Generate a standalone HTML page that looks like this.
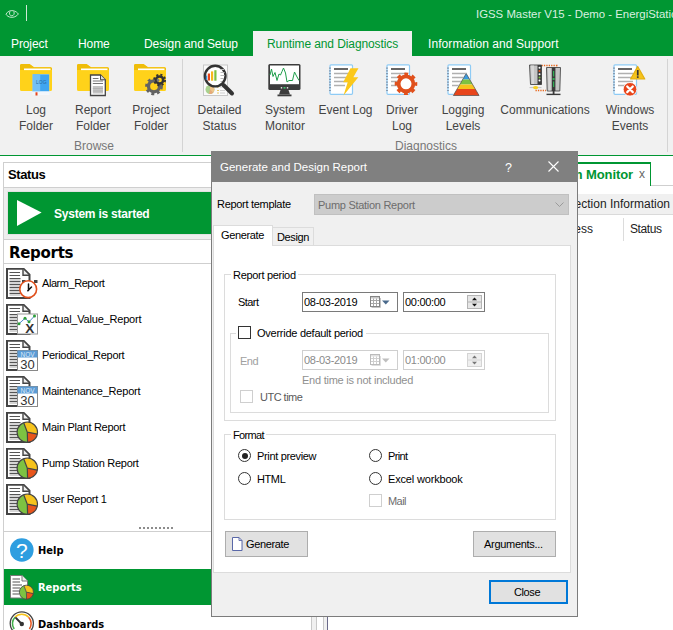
<!DOCTYPE html>
<html><head><meta charset="utf-8"><title>IGSS Master V15 - Demo - EnergiStation</title>
<style>
*{box-sizing:border-box;margin:0;padding:0}
html,body{width:673px;height:630px;overflow:hidden;background:#fff}
body{position:relative;font-family:"Liberation Sans",sans-serif;font-size:12px;color:#000}
.abs{position:absolute}
.t{position:absolute;white-space:nowrap;line-height:1}
#titlebar{left:0;top:0;width:673px;height:56px;background:#009632}
.rt{color:#fff;font-size:12px;top:38px;letter-spacing:-0.1px}
#ribbon{left:0;top:56px;width:673px;height:99px;background:#f1f1f1}
.rl{color:#444;font-size:12px;text-align:center;line-height:15.5px;white-space:nowrap;position:absolute;transform:translateX(-50%)}
.gl{color:#777;font-size:12px;position:absolute;transform:translateX(-50%);top:139px;line-height:14px}
.ico{position:absolute;width:32px;height:32px;top:63px}
.li{position:absolute;left:42px;font-size:11px;line-height:14px;white-space:nowrap;letter-spacing:-0.22px}
.dl{position:absolute;font-size:11px;line-height:14px;white-space:nowrap;letter-spacing:-0.3px}
.nb{position:absolute;left:38px;font-family:"DejaVu Sans Condensed","DejaVu Sans",sans-serif;font-weight:bold;font-size:11px;line-height:14px;letter-spacing:0}
.rad{width:13px;height:13px;border-radius:50%;border:1px solid #333;background:#fff}
.btn{background:#e1e1e1;border:1px solid #adadad}
</style></head><body>
<!-- title + ribbon tabs -->
<div id="titlebar" class="abs"></div>
<div class="abs" style="left:253px;top:31px;width:159px;height:25px;background:#f1f1f1"></div>
<div class="abs" style="left:26px;top:5px;width:1px;height:16px;background:#cfe8d6"></div>
<svg class="abs" style="left:5px;top:9px" width="15" height="10" viewBox="0 0 15 10"><path d="M1 5.200C2.500 2.200 5.500 1.300 8 1.700C10.500 2.100 12.500 3.600 13.400 5C11.500 7.600 8.500 8.600 6 8.300C3.500 8 1.800 6.800 1 5.200Z" fill="none" stroke="#d6efdd" stroke-width="0.900"/><path d="M5 2.500C3.800 4.500 4.800 6.800 6.800 6.800C8.800 6.800 9.800 4.500 8.800 2.500" fill="none" stroke="#d6efdd" stroke-width="0.900"/></svg>
<div class="t" style="left:476px;top:9px;color:#d9f0e0;font-size:11.4px">IGSS Master V15 - Demo - EnergiStation</div>
<div class="t rt" style="left:11px">Project</div>
<div class="t rt" style="left:78px">Home</div>
<div class="t rt" style="left:144px">Design and Setup</div>
<div class="t rt" style="left:267px;color:#009632">Runtime and Diagnostics</div>
<div class="t rt" style="left:428px;letter-spacing:0.08px">Information and Support</div>

<div id="ribbon" class="abs"></div>
<div class="abs" style="left:0;top:155px;width:673px;height:1px;background:#009632"></div>
<div class="abs" style="left:182px;top:59px;width:1px;height:93px;background:#d4d4d4"></div>
<div class="abs" style="left:667px;top:59px;width:1px;height:93px;background:#d4d4d4"></div>

<div class="rl" style="left:36px;top:103px">Log<br>Folder</div>
<div class="rl" style="left:93px;top:103px">Report<br>Folder</div>
<div class="rl" style="left:151px;top:103px">Project<br>Folder</div>
<div class="rl" style="left:219.500px;top:103px">Detailed<br>Status</div>
<div class="rl" style="left:285px;top:103px">System<br>Monitor</div>
<div class="rl" style="left:345.500px;top:103px">Event Log</div>
<div class="rl" style="left:402px;top:103px">Driver<br>Log</div>
<div class="rl" style="left:463px;top:103px">Logging<br>Levels</div>
<div class="rl" style="left:545px;top:103px">Communications</div>
<div class="rl" style="left:630px;top:103px">Windows<br>Events</div>
<div class="gl" style="left:94px">Browse</div>
<div class="gl" style="left:426px">Diagnostics</div>

<!-- left panel -->
<div class="abs" style="left:3px;top:162px;width:211px;height:470px;border:1px solid #cfcfcf;border-right:none;background:#fff"></div>
<div class="abs" style="left:4px;top:187px;width:209px;height:53px;background:#eeeeee;border-top:1px solid #cfcfcf;border-bottom:1px solid #cfcfcf"></div>
<div class="abs" style="left:8px;top:192px;width:205px;height:42px;background:#009632;box-shadow:0 0 0 1px #e2e2e2"></div>
<svg class="abs" style="left:17px;top:200px" width="25" height="26"><polygon points="0,0 24.6,12.6 0,26" fill="#fff"/></svg>
<div class="t" style="left:8px;top:168px;font-weight:bold;font-size:13px;letter-spacing:-0.4px">Status</div>
<div class="t" style="left:54px;top:208px;font-weight:bold;font-size:12px;color:#fff;letter-spacing:-0.23px">System is started</div>
<div class="t" style="left:9px;top:246px;font-family:'DejaVu Sans',sans-serif;font-weight:bold;font-size:15px;letter-spacing:-0.3px">Reports</div>
<div class="abs" style="left:4px;top:263px;width:209px;height:1px;background:#cfcfcf"></div>

<div class="li" style="top:276px;letter-spacing:-0.45px">Alarm_Report</div>
<div class="li" style="top:312px;letter-spacing:-0.20px">Actual_Value_Report</div>
<div class="li" style="top:348px;letter-spacing:-0.30px">Periodical_Report</div>
<div class="li" style="top:384px;letter-spacing:-0.21px">Maintenance_Report</div>
<div class="li" style="top:420px;letter-spacing:-0.28px">Main Plant Report</div>
<div class="li" style="top:456px;letter-spacing:-0.29px">Pump Station Report</div>
<div class="li" style="top:492px;letter-spacing:-0.31px">User Report 1</div>

<div class="abs" style="left:4px;top:531px;width:209px;height:1px;background:#cfcfcf"></div>
<div class="abs" style="left:4px;top:569px;width:209px;height:36px;background:#009632"></div>
<div class="nb" style="top:544px">Help</div>
<div class="nb" style="top:581px;color:#fff">Reports</div>
<div class="nb" style="top:618px">Dashboards</div>


<!-- svg defs -->
<svg width="0" height="0" style="position:absolute">
<defs>
<g id="folder"><path d="M0 1.500Q0 0 1.500 0H9.500L14 3.200H30.500Q32 3.200 32 4.700V25.500Q32 27 30.500 27H1.500Q0 27 0 25.500Z" fill="#ffd21a"/><path d="M0 1.500Q0 0 1.500 0H9.500L14 3.200H30.500Q32 3.200 32 4.700V6H0Z" fill="#efbd0a"/><rect x="4" y="4.500" width="26.500" height="1.600" fill="#fff"/></g>
<g id="doc"><path d="M1 0.700H17.500L23.500 6.700V30H1Z" fill="#fff" stroke="#444" stroke-width="2"/><path d="M17 1.200V7.200H23" fill="#eee" stroke="#444" stroke-width="1.400"/><path d="M3.500 4.500H14M3.500 7.500H14M3.500 10.500H14.500M3.500 13.500H14.500M3.500 16.500H14.500M3.500 19.500H14.500M3.500 22.500H14.500M3.500 25.500H14.500" stroke="#555" stroke-width="1"/><path d="M3.500 12H14.500M3.500 15H14.500M3.500 18H14.500M3.500 21H14.500M3.500 24H14.500M3.500 27H14.500" stroke="#c8c8c8" stroke-width="1.400"/></g>
<g id="pie"><path d="M0 0L-3.6 -9.5A10.2 10.2 0 0 0 0.3 10.2Z" fill="#7dc242"/><path d="M0 0L-3.6 -9.5A10.2 10.2 0 0 1 10 1.9Z" fill="#f6c31c"/><path d="M0 0L10 1.9A10.2 10.2 0 0 1 0.3 10.2Z" fill="#e8551b"/><circle r="10.2" fill="none" stroke="#444" stroke-width="1.2"/><path d="M0 0L-3.6 -9.5M0 0L10 1.9M0 0L0.3 10.2" stroke="#444" stroke-width="1.2" fill="none"/></g>
<g id="cal"><rect x="0.5" y="0.5" width="20" height="20" fill="#fff" stroke="#888" stroke-width="1"/><rect x="0.5" y="0.5" width="20" height="7" fill="#5b9bd5"/><text x="10.5" y="6.6" font-family="Liberation Sans,sans-serif" font-size="6.5" fill="#dbe9f7" text-anchor="middle">NOV</text><text x="10.5" y="18.6" font-family="Liberation Sans,sans-serif" font-size="13" fill="#333" text-anchor="middle">30</text></g>
<g id="pad"><rect x="1" y="0.8" width="22.5" height="29.5" rx="1" fill="#fff" stroke="#8ecbf5" stroke-width="1.2"/><path d="M1 3.5V28" stroke="#7a8aa0" stroke-width="1.6" stroke-dasharray="1.2 1.6"/><rect x="5" y="4" width="14" height="2" fill="#666"/><path d="M5 9.5H20M5 13.5H20M5 17.5H20M5 21.5H16" stroke="#b0b0b0" stroke-width="1.4"/></g>
</defs></svg>
<!-- ribbon icons -->
<svg class="abs" style="left:20px;top:64px" width="34" height="34"><use href="#folder"/><rect x="12.700" y="10.300" width="16.500" height="20.500" fill="#fff"/><rect x="12.700" y="10.300" width="16.500" height="17.200" fill="#3fa5f0"/><rect x="12.700" y="10.300" width="7.500" height="17.200" fill="#72c0f6"/><text x="21.300" y="20.200" font-family="Liberation Sans,sans-serif" font-size="5" fill="#2a6a9c" text-anchor="middle">LOG</text><rect x="12.700" y="27.500" width="16.500" height="3.300" fill="#f2f6fb"/><rect x="15.500" y="28.300" width="2" height="3.200" fill="#e8451b"/></svg>
<svg class="abs" style="left:77px;top:64px" width="34" height="34"><use href="#folder"/><path d="M13.500 11H23.500L28.300 15.800V31.500H13.500Z" fill="#fff" stroke="#444" stroke-width="1.300"/><path d="M23.500 11V15.800H28.300" fill="#ddd" stroke="#444" stroke-width="1"/><path d="M15.800 14.500H21.500M15.800 17H26M15.800 19.500H26" stroke="#666" stroke-width="0.900"/><rect x="15.800" y="22" width="10.200" height="7.500" fill="#c4c4c4"/><path d="M15.800 24.500H26M15.800 27H26" stroke="#aaa" stroke-width="0.700"/></svg>
<svg class="abs" style="left:134px;top:64px" width="36" height="36"><use href="#folder"/><circle cx="20" cy="22.300" r="5.500" fill="none" stroke="#636363" stroke-width="3.300"/><circle cx="20" cy="22.300" r="7.700" fill="none" stroke="#636363" stroke-width="2.400" stroke-dasharray="2.945 2.945"/><circle cx="25.700" cy="16" r="3.500" fill="#ffd21a" stroke="#333" stroke-width="2.600"/><circle cx="25.700" cy="16" r="5.400" fill="none" stroke="#333" stroke-width="1.800" stroke-dasharray="2.121 2.121"/><path d="M25.700 16L23.500 14.200A2.800 2.800 0 0 0 24.200 18.300Z" fill="#777"/></svg>
<!-- detailed status -->
<svg class="abs" style="left:200px;top:63px" width="36" height="36"><rect x="3.500" y="2" width="24" height="30.500" fill="#fafafa" stroke="#c8c8c8" stroke-width="1"/><path d="M17 24H19M17 27.500H19M17 30H19" stroke="#e8c860" stroke-width="1"/><path d="M20 24H25M20 27.500H25M20 30H25" stroke="#d0d0d0" stroke-width="1"/><circle cx="10" cy="26.500" r="4.500" fill="#a9d18e"/><path d="M10 26.500V22A4.500 4.500 0 0 1 13.200 29.700Z" fill="#f0c48a"/><path d="M10 26.500L13.200 29.700A4.500 4.500 0 0 1 9 30.900Z" fill="#e8a878"/><circle cx="15.200" cy="13.100" r="10.300" fill="#fff" fill-opacity="0.900" stroke="#333" stroke-width="2.400"/><path d="M20.500 6.500H24M20.500 9.500H24.500M20.500 12.500H24.500M20.500 15.500H24M20.500 18.500H22" stroke="#b8b8b8" stroke-width="1.200"/><rect x="5.800" y="12.500" width="1.400" height="4.500" fill="#3b8fd6"/><rect x="7.800" y="10.500" width="2.200" height="7" fill="#e8451b"/><rect x="11" y="8.400" width="2.200" height="9.300" fill="#f6b81c"/><rect x="14.300" y="7.200" width="2.200" height="10.500" fill="#7dc242"/><path d="M23.500 22L32 30.500" stroke="#333" stroke-width="4" stroke-linecap="round"/></svg>
<!-- system monitor -->
<svg class="abs" style="left:267.600px;top:63px" width="34" height="34"><rect x="0.300" y="1" width="32.200" height="26" rx="1.500" fill="#3c3c3c"/><rect x="2" y="2.500" width="29" height="18.700" fill="#fff"/><path d="M2 12L3.500 6L5 13.500L7 9.500L9 17.500L11 11L12.500 12L14 8.500L15.500 5L17.500 10L19 19L21 17.500H24.500L26.500 9L28.500 13L31 17.500" fill="none" stroke="#1e9e4a" stroke-width="1"/><rect x="15.500" y="24" width="2" height="1.600" fill="#3fbf6a"/><rect x="12.800" y="24" width="1.400" height="1.600" fill="#ddd"/><rect x="18.800" y="24" width="1.400" height="1.600" fill="#ddd"/><path d="M12.500 27H20.500L22 31.500H11Z" fill="#3c3c3c"/><rect x="9.500" y="31.500" width="14" height="1.800" fill="#3c3c3c"/></svg>
<!-- event log -->
<svg class="abs" style="left:329px;top:64px" width="36" height="36"><use href="#pad"/><path d="M21.500 4.200H29.500L24.300 13.200H29.300L14.500 31.500L18.700 18.200H14.200Z" fill="#fbc81a"/></svg>
<!-- driver log -->
<svg class="abs" style="left:386px;top:64px" width="36" height="36"><use href="#pad"/><circle cx="20" cy="19.800" r="7.400" fill="#fff" stroke="#e0501c" stroke-width="3.800"/><circle cx="20" cy="19.800" r="10" fill="none" stroke="#e0501c" stroke-width="2.600" stroke-dasharray="3.927 3.927" stroke-dashoffset="2"/></svg>
<!-- logging levels -->
<svg class="abs" style="left:447px;top:64px" width="36" height="36"><use href="#pad"/><g transform="translate(-1.300,-1)"><path d="M20.500 9.500L6.500 33H34.500Z" fill="#fff"/><path d="M20.500 10.500L16.900 16.600H24.100Z" fill="#3b9be0"/><path d="M16.900 16.600L14.100 21.400H26.900L24.100 16.600Z" fill="#7dc242"/><path d="M14.100 21.400L11.400 26H29.600L26.900 21.400Z" fill="#f6c31c"/><path d="M11.400 26L7.600 32.500H33.400L29.600 26Z" fill="#e8451b"/><path d="M20.500 10.500L7.600 32.500H33.400Z" fill="none" stroke="#4a4a4a" stroke-width="0.700"/></g></svg>
<!-- communications -->
<svg class="abs" style="left:526px;top:62px" width="38" height="36"><path d="M15.500 3.500H31V5.500" fill="none" stroke="#e8661b" stroke-width="1.300" stroke-dasharray="1.300 1.100"/><path d="M9.500 28.500H20" fill="none" stroke="#e8661b" stroke-width="1.300" stroke-dasharray="1.300 1.100"/><path d="M3.500 3H15.500V22.500H4.500Z" fill="#c4c4c4" stroke="#4a4a4a" stroke-width="0.900"/><path d="M5 3.500H8V22H5.800Z" fill="#d8d8d8"/><rect x="11.500" y="3" width="4" height="19.500" fill="#3a3a3a"/><circle cx="13.500" cy="5.800" r="1" fill="#fff"/><circle cx="13.500" cy="9" r="1" fill="#e8551b"/><circle cx="13.500" cy="12.200" r="1" fill="#fff"/><circle cx="13.500" cy="15.400" r="1" fill="#7dc242"/><circle cx="13.500" cy="18.600" r="1" fill="#fff"/><path d="M3.500 25.600H15.500" stroke="#c0c0c0" stroke-width="1"/><ellipse cx="9.600" cy="25.600" rx="2.600" ry="1.600" fill="#f6cf1c"/><path d="M20.500 5.500H34.500L33.800 29H21.200Z" fill="#c4c4c4" stroke="#4a4a4a" stroke-width="0.900"/><path d="M22 6H24.500V28.500H22.500Z" fill="#d8d8d8"/><rect x="25.800" y="5.500" width="3.600" height="23.500" fill="#3a3a3a"/><rect x="27" y="9" width="1.200" height="5.500" fill="#2fae55"/><rect x="26.600" y="16" width="2" height="2" fill="#2fae55"/><rect x="27" y="19.500" width="1.200" height="5.500" fill="#2fae55"/><path d="M27.600 29V32" stroke="#3a3a3a" stroke-width="1.800"/><path d="M20.500 32.400H34.500" stroke="#3a3a3a" stroke-width="1.400"/></svg>
<!-- windows events -->
<svg class="abs" style="left:613px;top:64px" width="38" height="36"><use href="#pad"/><path d="M24.700 2.500L31.800 15H17.600Z" fill="#f6c31c" stroke="#e2ae10" stroke-width="1.200" stroke-linejoin="round"/><rect x="23.900" y="6" width="1.700" height="5.500" fill="#333"/><rect x="23.900" y="12.300" width="1.700" height="1.600" fill="#333"/><circle cx="17" cy="25.300" r="6.800" fill="#e8451b" stroke="#fff" stroke-width="0.800"/><path d="M14.200 22.500L19.800 28.100M19.800 22.500L14.200 28.100" stroke="#fff" stroke-width="2.200" stroke-linecap="round"/></svg>
<!-- list icons -->
<svg class="abs" style="left:6px;top:268px" width="34" height="32"><use href="#doc"/><rect x="16" y="12" width="3.500" height="3" fill="#444"/><rect x="28" y="12" width="3.500" height="3" fill="#444"/><circle cx="22.200" cy="21.200" r="8.400" fill="#fff" stroke="#e0501c" stroke-width="1.600"/><path d="M22.500 16V22.500M21.800 22.800L25.500 19" stroke="#111" stroke-width="1.500" fill="none" stroke-linecap="round"/></svg>
<svg class="abs" style="left:6px;top:304px" width="34" height="32"><use href="#doc"/><rect x="11.500" y="10" width="20" height="20" fill="#fff" stroke="#999" stroke-width="1"/><path d="M13 19.700L19 14.300L23 17.800L28.500 12" fill="none" stroke="#4a86c8" stroke-width="1"/><circle cx="13" cy="19.700" r="1.500" fill="#2e9e3a"/><circle cx="19" cy="14.300" r="1.500" fill="#2e9e3a"/><circle cx="23" cy="17.800" r="1.500" fill="#2e9e3a"/><circle cx="28.500" cy="12" r="1.500" fill="#2e9e3a"/><text x="23.800" y="29.300" font-family="Liberation Sans,sans-serif" font-size="13.500" font-weight="bold" fill="#333" text-anchor="middle">X</text></svg>
<svg class="abs" style="left:6px;top:340px" width="34" height="32"><use href="#doc"/><use href="#cal" x="11" y="10"/></svg>
<svg class="abs" style="left:6px;top:376px" width="34" height="32"><use href="#doc"/><use href="#cal" x="11" y="10"/></svg>
<svg class="abs" style="left:6px;top:412px" width="34" height="32"><use href="#doc"/><use href="#pie" x="21.300" y="20.200"/></svg>
<svg class="abs" style="left:6px;top:448px" width="34" height="32"><use href="#doc"/><use href="#pie" x="21.300" y="20.200"/></svg>
<svg class="abs" style="left:6px;top:484px" width="34" height="32"><use href="#doc"/><use href="#pie" x="21.300" y="20.200"/></svg>
<!-- nav icons -->
<svg class="abs" style="left:9px;top:537px" width="26" height="26"><circle cx="12.800" cy="13" r="11.800" fill="#2e9ee0"/><text x="12.800" y="21.300" font-family="Liberation Sans,sans-serif" font-size="21" fill="#fff" text-anchor="middle">?</text></svg>
<svg class="abs" style="left:9px;top:574px" width="28" height="26"><path d="M1.500 1.500H13L18.500 7V24H1.500Z" fill="#fff" stroke="#777" stroke-width="1"/><path d="M13 1.500V7H18.500" fill="#eee" stroke="#777" stroke-width="1"/><path d="M3.500 5H11M3.500 8H11M3.500 11H13M3.500 14H11M3.500 17H10M3.500 20H10" stroke="#555" stroke-width="1.100"/><g transform="translate(17.400,18.200) scale(0.690)"><use href="#pie"/></g></svg>
<svg class="abs" style="left:9px;top:610px" width="28" height="22"><circle cx="12.800" cy="13.400" r="11.600" fill="#fff" stroke="#444" stroke-width="1.300"/><path d="M5.200 19A9.200 9.200 0 0 1 6 7.300" fill="none" stroke="#3fae49" stroke-width="1.500"/><path d="M6 7.300A9.200 9.200 0 0 1 19.600 7.300" fill="none" stroke="#f6c31c" stroke-width="1.500"/><path d="M19.600 7.300A9.200 9.200 0 0 1 20.400 19" fill="none" stroke="#e8551b" stroke-width="1.500"/><path d="M12.800 14L7 8" stroke="#333" stroke-width="1.800" stroke-linecap="round"/><circle cx="12.800" cy="14" r="2.200" fill="#333"/></svg>
<!-- dots grip -->
<div class="abs" style="left:139px;top:527px;width:34px;height:2px;background:repeating-linear-gradient(90deg,#8c8c8c 0 2px,transparent 2px 4px)"></div>
<!-- right background -->
<div class="abs" style="left:214px;top:185px;width:459px;height:1px;background:#cfcfcf"></div>
<div class="abs" style="left:520px;top:162px;width:131px;height:24px;background:#fff;border-top:2px solid #009632;border-right:1px solid #009632;border-left:1px solid #009632"></div>
<div class="t" style="right:40px;top:168px;font-weight:bold;font-size:13px;color:#009632;letter-spacing:-0.1px">System Monitor</div>
<div class="t" style="left:639px;top:168px;font-size:12px;color:#666">x</div>
<div class="abs" style="left:214px;top:194px;width:459px;height:21px;background:#f0f0f0;border-bottom:1px solid #dadada"></div>
<div class="t" style="right:3px;top:198px;font-size:12px;color:#222">Connection Information</div>
<div class="t" style="right:80px;top:223px;font-size:12px;color:#222">Address</div>
<div class="abs" style="left:623px;top:218px;width:1px;height:23px;background:#dcdcdc"></div>
<div class="t" style="left:630px;top:223px;font-size:12px;color:#222;letter-spacing:-0.4px">Status</div>
<div class="abs" style="left:311px;top:617px;width:6px;height:13px;background:#f0f0f0;border-left:1px solid #c8c8c8;border-right:1px solid #c8c8c8"></div>
<div class="abs" style="left:323px;top:617px;width:5px;height:13px;background:#f0f0f0;border-left:1px solid #c8c8c8;border-right:1px solid #6a6a8a"></div>


<!-- dialog -->
<div id="dlg" class="abs" style="left:211px;top:151px;width:367px;height:466px;background:#f0f0f0;border:1px solid #7c7c7c"></div>
<div class="abs" style="left:211px;top:151px;width:367px;height:31px;background:#808080"></div>
<div class="t" style="left:220px;top:162px;color:#fff;font-size:11.5px">Generate and Design Report</div>
<div class="t" style="left:505px;top:161.5px;color:#fff;font-size:12.5px">?</div>
<svg class="abs" style="left:548px;top:161px" width="11" height="11"><path d="M0.5 0.5L10.5 10.5M10.5 0.5L0.5 10.5" stroke="#fff" stroke-width="1.1" fill="none"/></svg>
<div class="dl" style="left:217px;top:197px">Report template</div>
<div class="abs" style="left:314px;top:194px;width:255px;height:21px;background:#cccccc;border:1px solid #c0c0c0"></div>
<div class="dl" style="left:318px;top:198px;color:#6d6d6d;letter-spacing:-0.28px">Pump Station Report</div>
<svg class="abs" style="left:555px;top:202px" width="10" height="6"><path d="M0.5 0.5L4.5 4.5L8.5 0.5" stroke="#9a9a9a" stroke-width="1" fill="none"/></svg>
<!-- tabs -->
<div class="abs" style="left:213px;top:245px;width:358px;height:328px;background:#fff;border:1px solid #dcdcdc"></div>
<div class="abs" style="left:213px;top:225px;width:60px;height:21px;background:#fff;border:1px solid #dcdcdc;border-bottom:none"></div>
<div class="abs" style="left:272px;top:227px;width:42px;height:18px;background:#f0f0f0;border:1px solid #dcdcdc;border-bottom:none"></div>
<div class="dl" style="left:221px;top:228px;letter-spacing:-0.37px">Generate</div>
<div class="dl" style="left:277px;top:230px;letter-spacing:-0.38px">Design</div>
<!-- group report period -->
<div class="abs" style="left:224px;top:274px;width:332px;height:147px;border:1px solid #dcdcdc"></div>
<div class="dl" style="left:231px;top:268px;background:#fff;padding:0 2px">Report period</div>
<div class="dl" style="left:238px;top:295px;letter-spacing:-0.55px">Start</div>
<div class="abs" style="left:302px;top:292px;width:96px;height:20px;background:#fff;border:1px solid #7a7a7a"></div>
<div class="dl" style="left:304px;top:295px">08-03-2019</div>
<svg class="abs" style="left:370px;top:296px" width="22" height="13"><path d="M1.500 11.500H10.500V2" stroke="#c4c4c4" fill="none"/><rect x="0.5" y="0.5" width="9" height="10" fill="#fff" stroke="#858585"/><rect x="1" y="1" width="8" height="1.500" fill="#c8c8c8"/><path d="M1 4.500H9M1 7.500H9M3.500 2.500V10M6.500 2.500V10" stroke="#a8a8a8" stroke-width="1"/><path d="M12 4.500H19.500L15.750 8.500Z" fill="#4a6a8c"/></svg>
<div class="abs" style="left:403px;top:292px;width:82px;height:20px;background:#fff;border:1px solid #7a7a7a"></div>
<div class="dl" style="left:405px;top:295px">00:00:00</div>
<svg class="abs" style="left:467px;top:295px" width="15" height="14"><rect x="0.5" y="0.5" width="14" height="13" fill="#e6e6e6" stroke="#b4b4b4"/><path d="M0.5 7H14.500" stroke="#b4b4b4"/><path d="M5 5.300H10L7.500 2.500Z" fill="#111"/><path d="M5 8.700H10L7.500 11.500Z" fill="#111"/></svg>
<!-- inner group -->
<div class="abs" style="left:230px;top:333px;width:319px;height:80px;border:1px solid #dcdcdc"></div>
<div class="abs" style="left:236px;top:325px;width:130px;height:16px;background:#fff"></div>
<div class="abs" style="left:238px;top:326px;width:13px;height:13px;background:#fff;border:1px solid #333"></div>
<div class="dl" style="left:257px;top:325.500px;letter-spacing:-0.26px">Override default period</div>
<div class="dl" style="left:240px;top:354px;color:#a0a0a0;letter-spacing:-0.50px">End</div>
<div class="abs" style="left:302px;top:350px;width:96px;height:20px;background:#fff;border:1px solid #cfcfcf"></div>
<div class="dl" style="left:304px;top:353px;color:#8a8a8a">08-03-2019</div>
<svg class="abs" style="left:370px;top:354px" width="22" height="13" opacity="0.55"><path d="M1.500 11.500H10.500V2" stroke="#c4c4c4" fill="none"/><rect x="0.5" y="0.5" width="9" height="10" fill="#fff" stroke="#858585"/><rect x="1" y="1" width="8" height="1.500" fill="#c8c8c8"/><path d="M1 4.500H9M1 7.500H9M3.500 2.500V10M6.500 2.500V10" stroke="#a8a8a8" stroke-width="1"/><path d="M12 4.500H19.500L15.750 8.500Z" fill="#8a8a8a"/></svg>
<div class="abs" style="left:403px;top:350px;width:82px;height:20px;background:#fff;border:1px solid #cfcfcf"></div>
<div class="dl" style="left:405px;top:353px;color:#8a8a8a">01:00:00</div>
<svg class="abs" style="left:467px;top:353px" width="15" height="14"><rect x="0.5" y="0.5" width="14" height="13" fill="#efefef" stroke="#d4d4d4"/><path d="M0.5 7H14.500" stroke="#d4d4d4"/><path d="M5 5.300H10L7.500 2.500Z" fill="#777"/><path d="M5 8.700H10L7.500 11.500Z" fill="#777"/></svg>
<div class="dl" style="left:302px;top:372.500px;color:#909090;letter-spacing:-0.24px">End time is not included</div>
<div class="abs" style="left:240px;top:390px;width:13px;height:13px;background:#fff;border:1px solid #cfcfcf"></div>
<div class="dl" style="left:260px;top:390px;color:#5a5a5a;letter-spacing:-0.51px">UTC time</div>
<!-- group format -->
<div class="abs" style="left:224px;top:434px;width:332px;height:86px;border:1px solid #dcdcdc"></div>
<div class="dl" style="left:231px;top:428px;background:#fff;padding:0 2px;letter-spacing:-0.64px">Format</div>
<div class="abs rad" style="left:238px;top:449px"></div><div class="abs" style="left:241.500px;top:452.500px;width:6px;height:6px;border-radius:50%;background:#222"></div>
<div class="dl" style="left:257px;top:449px;letter-spacing:-0.34px">Print preview</div>
<div class="abs rad" style="left:238px;top:472px"></div>
<div class="dl" style="left:257px;top:472px;letter-spacing:-0.40px">HTML</div>
<div class="abs rad" style="left:369px;top:449px"></div>
<div class="dl" style="left:388px;top:449px;letter-spacing:-0.62px">Print</div>
<div class="abs rad" style="left:369px;top:472px"></div>
<div class="dl" style="left:388px;top:472px;letter-spacing:-0.17px">Excel workbook</div>
<div class="abs" style="left:369px;top:494px;width:13px;height:13px;background:#fff;border:1px solid #cfcfcf"></div>
<div class="dl" style="left:388px;top:494px;color:#6d6d6d;letter-spacing:-0.54px">Mail</div>
<!-- buttons -->
<div class="abs btn" style="left:225px;top:531px;width:83px;height:26px"></div>
<svg class="abs" style="left:231px;top:536px" width="14" height="17"><path d="M2 2.500H8.500L11.500 5.500V15H2Z" fill="#c9cde0"/><path d="M1.500 1.500H8L11 4.500V14.500H1.500Z" fill="#fff" stroke="#5a68a8" stroke-width="1"/><path d="M8 1.500V4.500H11" fill="none" stroke="#5a68a8" stroke-width="0.900"/></svg>
<div class="dl" style="left:246px;top:537px;letter-spacing:-0.37px">Generate</div>
<div class="abs btn" style="left:473px;top:531px;width:83px;height:26px"></div>
<div class="dl" style="left:484px;top:537px">Arguments...</div>
<div class="abs btn" style="left:489px;top:580px;width:79px;height:24px;border:2px solid #0078d7"></div>
<div class="dl" style="left:514px;top:585px;letter-spacing:-0.39px">Close</div>
</body></html>
